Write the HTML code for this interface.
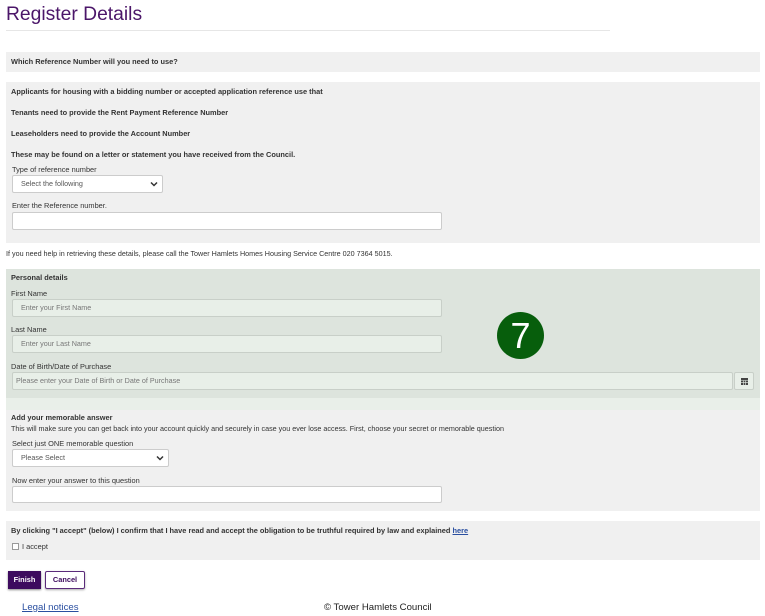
<!DOCTYPE html>
<html><head><style>
body{margin:0;width:765px;height:616px;background:#fff;font-family:"Liberation Sans",Arial,sans-serif;color:#222;position:relative;overflow:hidden}
.a{position:absolute}
.b{font-weight:bold;font-size:7.4px;color:#333}
.l{font-size:7.4px;color:#333}
.box{position:absolute;left:6px;width:754px}
.inp{position:absolute;background:#fff;border:1px solid #ccc;border-radius:2px;box-sizing:border-box;font-size:7.2px;color:#777;padding-left:8px;line-height:16px}
.g{background:#e8efe8;border-color:#c8cfc8}
.chev{position:absolute;right:4px;top:5px}
</style></head><body>
<div class="a" style="left:6px;top:4px;font-size:19.3px;color:#4b1669">Register Details</div>
<div class="a" style="left:6px;top:30px;width:604px;height:1px;background:#e6e6e6"></div>

<div class="box" style="top:52px;height:20px;background:#f0f0f0"></div>
<div class="a b" style="left:11px;top:57px">Which Reference Number will you need to use?</div>

<div class="box" style="top:82px;height:161px;background:#f0f0f0"></div>
<div class="a b" style="left:11px;top:87px">Applicants for housing with a bidding number or accepted application reference use that</div>
<div class="a b" style="left:11px;top:108px">Tenants need to provide the Rent Payment Reference Number</div>
<div class="a b" style="left:11px;top:129px">Leaseholders need to provide the Account Number</div>
<div class="a b" style="left:11px;top:150px">These may be found on a letter or statement you have received from the Council.</div>
<div class="a l" style="left:12px;top:165px">Type of reference number</div>
<div class="inp" style="left:12px;top:175px;width:151px;height:18px;color:#555">Select the following<svg class="chev" width="8" height="6" viewBox="0 0 8 6"><path d="M1 1.5 4 4.5 7 1.5" fill="none" stroke="#333" stroke-width="1.5"/></svg></div>
<div class="a l" style="left:12px;top:201px">Enter the Reference number.</div>
<div class="inp" style="left:12px;top:212px;width:430px;height:18px"></div>
<div class="a l" style="left:6px;top:249px;font-size:7.2px">If you need help in retrieving these details, please call the Tower Hamlets Homes Housing Service Centre 020 7364 5015.</div>

<div class="box" style="top:269px;height:129px;background:#dde4dd"></div>
<div class="box" style="top:398px;height:12px;background:#e9efe9"></div>
<div class="a b" style="left:11px;top:273px">Personal details</div>
<div class="a l" style="left:11px;top:289px">First Name</div>
<div class="inp g" style="left:12px;top:299px;width:430px;height:18px">Enter your First Name</div>
<div class="a l" style="left:11px;top:325px">Last Name</div>
<div class="inp g" style="left:12px;top:335px;width:430px;height:18px">Enter your Last Name</div>
<div class="a l" style="left:11px;top:362px">Date of Birth/Date of Purchase</div>
<div class="inp g" style="left:12px;top:372px;width:721px;height:18px;padding-left:3px">Please enter your Date of Birth or Date of Purchase</div>
<div class="inp g" style="left:734px;top:372px;width:20px;height:18px;padding:0"><svg style="position:absolute;left:6px;top:5px" width="7" height="7" viewBox="0 0 7 7"><rect x="0" y="0" width="7" height="7" fill="#444"/><path d="M0 2.5H7M0 4.7H7M2.3 2.5V7M4.7 2.5V7" stroke="#e8efe8" stroke-width="0.6"/></svg></div>
<div class="a" style="left:497px;top:312px;width:47px;height:47px;border-radius:50%;background:#075e0c;color:#fff;font-size:36px;text-align:center;line-height:47px">7</div>

<div class="box" style="top:410px;height:101px;background:#f0f0f0"></div>
<div class="a b" style="left:11px;top:413px">Add your memorable answer</div>
<div class="a l" style="left:11px;top:424px;font-size:7.2px">This will make sure you can get back into your account quickly and securely in case you ever lose access. First, choose your secret or memorable question</div>
<div class="a l" style="left:12px;top:439px">Select just ONE memorable question</div>
<div class="inp" style="left:12px;top:449px;width:157px;height:18px;color:#555">Please Select<svg class="chev" width="8" height="6" viewBox="0 0 8 6"><path d="M1 1.5 4 4.5 7 1.5" fill="none" stroke="#333" stroke-width="1.5"/></svg></div>
<div class="a l" style="left:12px;top:476px">Now enter your answer to this question</div>
<div class="inp" style="left:12px;top:486px;width:430px;height:17px"></div>

<div class="box" style="top:521px;height:39px;background:#f0f0f0"></div>
<div class="a b" style="left:11px;top:526px">By clicking "I accept" (below) I confirm that I have read and accept the obligation to be truthful required by law and explained <span style="color:#2a4fa0;text-decoration:underline">here</span></div>
<div class="a" style="left:12px;top:543px;width:5px;height:5px;border:1px solid #999;background:#fff"></div>
<div class="a l" style="left:22px;top:542px">I accept</div>

<div class="a" style="left:8px;top:571px;width:33px;height:18px;background:#3d0b5e;color:#fff;font-size:7.4px;font-weight:bold;text-align:center;line-height:18px;box-shadow:0 1px 2px #888">Finish</div>
<div class="a" style="left:45px;top:571px;width:38px;height:16px;border:1px solid #5a2a7a;border-radius:2px;color:#3d0b5e;font-size:7.4px;font-weight:bold;text-align:center;line-height:16px;box-shadow:0 1px 2px #aaa">Cancel</div>

<div class="a" style="left:22px;top:602px;font-size:9.6px;color:#2a4fa0;text-decoration:underline">Legal notices</div>
<div class="a" style="left:324px;top:602px;font-size:9.6px;color:#222">© Tower Hamlets Council</div>
</body></html>
